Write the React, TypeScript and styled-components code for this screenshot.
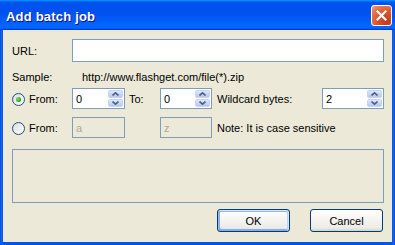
import * as React from 'react';
import styled, { createGlobalStyle } from 'styled-components';

const GlobalStyle = createGlobalStyle`
  html, body {
    margin: 0;
    padding: 0;
    background: #0055ea;
  }
  body {
    font-family: "Liberation Sans", Arial, sans-serif;
    font-size: 11px;
    color: #000;
  }
`;

const Window = styled.div`
  width: 395px;
  height: 245px;
  display: flex;
  flex-direction: column;
  background: linear-gradient(90deg, #0831d9 0, #166aee 1px, #0055ea 3px, #0055ea 392px, #166aee 394px, #0831d9 100%);
  box-sizing: border-box;
`;

const TitleBar = styled.div`
  height: 30px;
  flex: none;
  display: flex;
  align-items: center;
  justify-content: space-between;
  padding: 0 3px 0 6px;
  box-sizing: border-box;
  background: linear-gradient(180deg, #0997ff, #0053ee 8%, #0050ee 40%, #0066ff 88%, #0066ff 93%, #005bff 95%, #003dd7 96%, #003dd7);
`;

const Title = styled.span`
  font: bold 13px "Liberation Sans", Arial, sans-serif;
  color: #fff;
  text-shadow: 1px 1px #0f1089;
  letter-spacing: 0.2px;
  padding-top: 3px;
`;

const CloseButton = styled.div`
  width: 21px;
  height: 21px;
  box-sizing: border-box;
  border: 1px solid #fff;
  border-radius: 3px;
  margin-top: 1px;
  background: radial-gradient(circle at 80% 85%, #c3391b 0, #d9512c 45%, #e6774f 75%, #f0a17f 100%);
  display: flex;
  align-items: center;
  justify-content: center;
`;

const Body = styled.div`
  flex: 1;
  margin: 0 3px 3px;
  background: #ece9d8;
  padding: 9px 8px 0 9px;
  display: flex;
  flex-direction: column;
`;

const Row = styled.div<{ $h: number; $mt?: number }>`
  display: flex;
  align-items: center;
  height: ${p => p.$h}px;
  margin-top: ${p => p.$mt ?? 0}px;
`;

const LabelCell = styled.div<{ $w: number }>`
  width: ${p => p.$w}px;
  flex: none;
  display: flex;
  align-items: center;
`;

const Text = styled.span<{ $pl?: number; $grow?: boolean }>`
  padding-left: ${p => p.$pl ?? 0}px;
  flex: ${p => (p.$grow ? 1 : 'none')};
  white-space: nowrap;
`;

const TextBox = styled.div<{ $w?: number; $disabled?: boolean }>`
  height: 100%;
  width: ${p => (p.$w ? `${p.$w}px` : 'auto')};
  flex: ${p => (p.$w ? 'none' : 1)};
  box-sizing: border-box;
  border: 1px solid #7f9db9;
  background: ${p => (p.$disabled ? '#ece9d8' : '#fff')};
  color: ${p => (p.$disabled ? '#aca899' : '#000')};
  display: flex;
  align-items: center;
  padding-left: 3px;
  position: relative;
`;

const SpinValue = styled.span`
  flex: 1;
`;

const SpinButtons = styled.div`
  width: 15px;
  align-self: stretch;
  display: flex;
  flex-direction: column;
  gap: 1px;
  padding: 1px 1px 1px 0;
`;

const SpinHalf = styled.div`
  flex: 1;
  border-radius: 2px;
  border: 1px solid #c6d3f7;
  background: linear-gradient(180deg, #dfe8fc 0%, #c4d4f8 60%, #b5c8f2 100%);
  display: flex;
  align-items: center;
  justify-content: center;
`;

const Radio = styled.span<{ $checked?: boolean }>`
  width: 13px;
  height: 13px;
  box-sizing: border-box;
  border-radius: 50%;
  border: 1px solid #1d5281;
  background: linear-gradient(135deg, #dcdcd7, #fff);
  display: inline-flex;
  align-items: center;
  justify-content: center;
  margin-right: 4px;
  margin-top: 1px;
  &::after {
    content: '';
    display: ${p => (p.$checked ? 'block' : 'none')};
    width: 5px;
    height: 5px;
    border-radius: 50%;
    background: radial-gradient(circle at 35% 35%, #7be07b, #21a121 70%, #168c16);
  }
`;

const Panel = styled.div`
  height: 54px;
  margin-top: 11px;
  border: 1px solid #7f9db9;
  box-sizing: border-box;
`;

const ButtonBar = styled.div`
  display: flex;
  justify-content: flex-end;
  gap: 20px;
  margin-top: 6px;
  padding-right: 1px;
`;

const Button = styled.div<{ $default?: boolean }>`
  width: 73px;
  height: 23px;
  box-sizing: border-box;
  border: 1px solid #003c74;
  border-radius: 3px;
  background: linear-gradient(180deg, #fff, #ecebe6 86%, #d6d0c5);
  display: flex;
  align-items: center;
  justify-content: center;
  box-shadow: ${p =>
    p.$default
      ? 'inset -1px 1px #cee7ff, inset 1px 2px #98b8ea, inset -2px 2px #bcd4f6, inset 1px -1px #89ade4, inset 2px -2px #89ade4'
      : 'none'};
`;

const Arrow = ({ up }: { up?: boolean }) => (
  <svg width="7" height="4" viewBox="0 0 7 4">
    <polyline
      points={up ? '0.5,3.5 3.5,0.8 6.5,3.5' : '0.5,0.5 3.5,3.2 6.5,0.5'}
      fill="none"
      stroke="#4d6185"
      strokeWidth="1.6"
    />
  </svg>
);

const Spin = ({ value, w }: { value: string; w: number }) => (
  <TextBox $w={w}>
    <SpinValue>{value}</SpinValue>
    <SpinButtons>
      <SpinHalf><Arrow up /></SpinHalf>
      <SpinHalf><Arrow /></SpinHalf>
    </SpinButtons>
  </TextBox>
);

export default function App() {
  return (
    <>
      <GlobalStyle />
      <Window>
        <TitleBar>
          <Title>Add batch job</Title>
          <CloseButton>
            <svg width="11" height="11" viewBox="0 0 11 11">
              <path d="M1.5 1.5 L9.5 9.5 M9.5 1.5 L1.5 9.5" stroke="#fff" strokeWidth="2.2" strokeLinecap="square" />
            </svg>
          </CloseButton>
        </TitleBar>
        <Body>
          <Row $h={23}>
            <LabelCell $w={60}>URL:</LabelCell>
            <TextBox />
          </Row>
          <Row $h={22} $mt={4}>
            <LabelCell $w={70}>Sample:</LabelCell>
            <Text>http://www.flashget.com/file(*).zip</Text>
          </Row>
          <Row $h={21}>
            <LabelCell $w={60}>
              <Radio $checked />
              From:
            </LabelCell>
            <Spin value="0" w={53} />
            <LabelCell $w={35}><Text $pl={4}>To:</Text></LabelCell>
            <Spin value="0" w={52} />
            <Text $pl={5} $grow>Wildcard bytes:</Text>
            <Spin value="2" w={62} />
          </Row>
          <Row $h={21} $mt={8}>
            <LabelCell $w={60}>
              <Radio />
              From:
            </LabelCell>
            <TextBox $w={53} $disabled>a</TextBox>
            <LabelCell $w={35} />
            <TextBox $w={52} $disabled>z</TextBox>
            <Text $pl={5} $grow>Note: It is case sensitive</Text>
          </Row>
          <Panel />
          <ButtonBar>
            <Button $default>OK</Button>
            <Button>Cancel</Button>
          </ButtonBar>
        </Body>
      </Window>
    </>
  );
}
